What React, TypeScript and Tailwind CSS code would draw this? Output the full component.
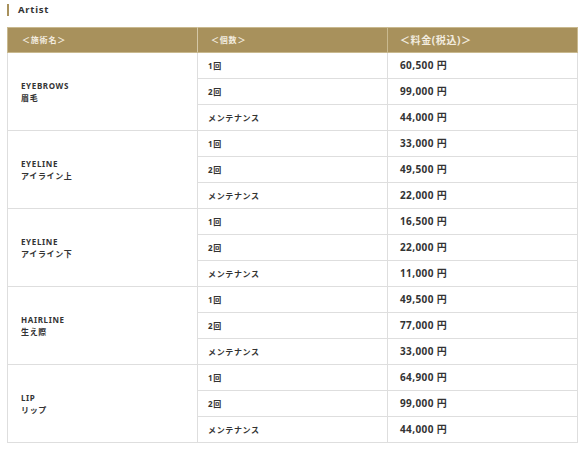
import React from "react";

const groups = [
  { en: "EYEBROWS", ja: "眉毛", prices: ["60,500", "99,000", "44,000"] },
  { en: "EYELINE", ja: "アイライン上", prices: ["33,000", "49,500", "22,000"] },
  { en: "EYELINE", ja: "アイライン下", prices: ["16,500", "22,000", "11,000"] },
  { en: "HAIRLINE", ja: "生え際", prices: ["49,500", "77,000", "33,000"] },
  { en: "LIP", ja: "リップ", prices: ["64,900", "99,000", "44,000"] },
];
const counts = ["1回", "2回", "メンテナンス"];

export default function App() {
  return (
    <div
      className="w-[585px] h-[450px] bg-white text-[#333]"
      style={{ fontFamily: '"Noto Sans", "Noto Sans CJK JP", sans-serif' }}
    >
      <div className="flex items-center pl-[7px] pt-[4px] h-[16px] mt-0">
        <div className="w-[2px] h-[12px] bg-[#a8915c]" />
        <span className="ml-[9px] text-[9.5px] font-bold tracking-[0.08em] leading-none">Artist</span>
      </div>
      <div className="pl-[7px] pt-[11px]">
        <table className="w-[570px] border-collapse table-fixed">
          <thead>
            <tr className="h-[25px] bg-[#a8915c] text-[#f3ede0]">
              <th className="w-[190px] text-left font-bold text-[8px] tracking-[0.1em] pl-[14px] border border-[#c9b98f] border-r-[#d4c7a6] border-r-dashed">＜施術名＞</th>
              <th className="w-[190px] text-left font-bold text-[8px] tracking-[0.1em] pl-[13px] border border-[#c9b98f]">＜個数＞</th>
              <th className="w-[190px] text-left font-bold text-[10px] tracking-[0.06em] pl-[12px] border border-[#c9b98f]">＜料金(税込)＞</th>
            </tr>
          </thead>
          <tbody>
            {groups.map((g, gi) =>
              counts.map((c, ci) => (
                <tr key={gi + "-" + ci} className="h-[26px]">
                  {ci === 0 && (
                    <td rowSpan={3} className="border border-[#dedede] pl-[13px] align-middle">
                      <div className="text-[8px] font-bold leading-[12px] tracking-[0.08em]">{g.en}</div>
                      <div className="text-[8px] font-bold leading-[11px] tracking-[0.08em]">{g.ja}</div>
                    </td>
                  )}
                  <td className="border border-[#dedede] pl-[10px] text-[8px] font-bold tracking-[0.08em]">{c}</td>
                  <td className="border border-[#dedede] pl-[12px] text-[10px] font-bold tracking-[0.04em]">
                    {g.prices[ci]} 円
                  </td>
                </tr>
              ))
            )}
          </tbody>
        </table>
      </div>
    </div>
  );
}
